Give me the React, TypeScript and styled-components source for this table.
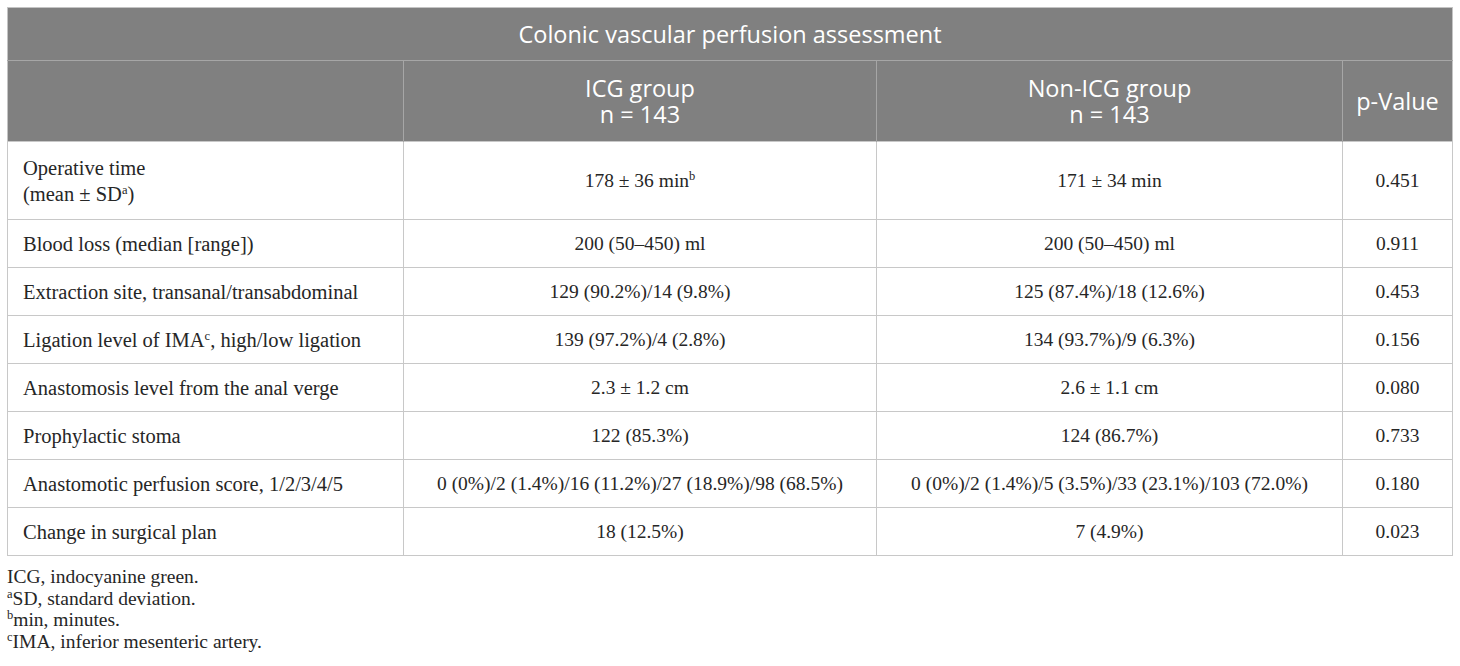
import styled, { createGlobalStyle } from 'styled-components'

const GlobalStyle = createGlobalStyle`
  body {
    margin: 0;
    background: #ffffff;
  }
`

const Sup = styled.sup`
  font-size: 12.5px;
  line-height: 0;
  vertical-align: 7px;
`

const rows = [
  { label: <>Operative time<br />(mean ± SD<Sup>a</Sup>)</>, icg: <>178 ± 36 min<Sup>b</Sup></>, non: '171 ± 34 min', p: '0.451', tall: true },
  { label: 'Blood loss (median [range])', icg: '200 (50–450) ml', non: '200 (50–450) ml', p: '0.911' },
  { label: 'Extraction site, transanal/transabdominal', icg: '129 (90.2%)/14 (9.8%)', non: '125 (87.4%)/18 (12.6%)', p: '0.453' },
  { label: <>Ligation level of IMA<Sup>c</Sup>, high/low ligation</>, icg: '139 (97.2%)/4 (2.8%)', non: '134 (93.7%)/9 (6.3%)', p: '0.156' },
  { label: 'Anastomosis level from the anal verge', icg: '2.3 ± 1.2 cm', non: '2.6 ± 1.1 cm', p: '0.080' },
  { label: 'Prophylactic stoma', icg: '122 (85.3%)', non: '124 (86.7%)', p: '0.733' },
  { label: 'Anastomotic perfusion score, 1/2/3/4/5', icg: '0 (0%)/2 (1.4%)/16 (11.2%)/27 (18.9%)/98 (68.5%)', non: '0 (0%)/2 (1.4%)/5 (3.5%)/33 (23.1%)/103 (72.0%)', p: '0.180' },
  { label: 'Change in surgical plan', icg: '18 (12.5%)', non: '7 (4.9%)', p: '0.023' }
]

const notes = [
  { mark: '', text: 'ICG, indocyanine green.' },
  { mark: 'a', text: 'SD, standard deviation.' },
  { mark: 'b', text: 'min, minutes.' },
  { mark: 'c', text: 'IMA, inferior mesenteric artery.' }
]

const App = () => {
  return (
    <StyledPage>
      <GlobalStyle />
      <StyledTable>
        <colgroup>
          <col style={{ width: 396 }} />
          <col style={{ width: 473 }} />
          <col style={{ width: 466 }} />
          <col style={{ width: 110 }} />
        </colgroup>
        <thead>
          <tr>
            <StyledTitle colSpan={4}>Colonic vascular perfusion assessment</StyledTitle>
          </tr>
          <tr>
            <StyledHead />
            <StyledHead>
              <StyledHeadLine>ICG group</StyledHeadLine>
              <StyledHeadLine>n = 143</StyledHeadLine>
            </StyledHead>
            <StyledHead>
              <StyledHeadLine>Non-ICG group</StyledHeadLine>
              <StyledHeadLine>n = 143</StyledHeadLine>
            </StyledHead>
            <StyledHead>p-Value</StyledHead>
          </tr>
        </thead>
        <tbody>
          {rows.map((row, i) => (
            <StyledRow key={i} $tall={row.tall}>
              <StyledLabel>{row.label}</StyledLabel>
              <StyledCell>{row.icg}</StyledCell>
              <StyledCell>{row.non}</StyledCell>
              <StyledCell>{row.p}</StyledCell>
            </StyledRow>
          ))}
        </tbody>
      </StyledTable>
      <StyledNotes>
        {notes.map((n) => (
          <StyledNote key={n.text}>
            {n.mark && <Sup>{n.mark}</Sup>}
            {n.text}
          </StyledNote>
        ))}
      </StyledNotes>
    </StyledPage>
  )
}

export default App

const StyledPage = styled.div`
  padding: 7px;
  font-family: 'Liberation Serif', 'Times New Roman', serif;
  color: #262626;
`

const StyledTable = styled.table`
  width: 1446px;
  border-collapse: collapse;
  table-layout: fixed;
  border: 1px solid #c4c4c4;
`

const StyledTitle = styled.th`
  height: 52px;
  padding: 0;
  background: #808080;
  color: #ffffff;
  font-family: 'Open Sans', 'Noto Sans', sans-serif;
  font-size: 23.5px;
  font-weight: 400;
  text-align: center;
  border-bottom: 1px solid #a6a6a6;
`

const StyledHead = styled.th`
  height: 80px;
  padding: 0;
  background: #808080;
  color: #ffffff;
  font-family: 'Open Sans', 'Noto Sans', sans-serif;
  font-size: 23.5px;
  font-weight: 400;
  text-align: center;
  border-left: 1px solid #a6a6a6;

  &:first-child {
    border-left: none;
  }
`

const StyledHeadLine = styled.div`
  line-height: 26px;
`

const StyledRow = styled.tr<{ $tall?: boolean }>`
  height: ${({ $tall }) => ($tall ? '78px' : '48px')};
`

const StyledCell = styled.td`
  padding: 0 8px;
  font-size: 19.5px;
  line-height: 26px;
  text-align: center;
  vertical-align: middle;
  border: 1px solid #c8c8c8;
`

const StyledLabel = styled(StyledCell)`
  padding-left: 15px;
  font-size: 20.5px;
  text-align: left;
`

const StyledNotes = styled.div`
  padding-top: 10px;
`

const StyledNote = styled.div`
  font-size: 19.5px;
  line-height: 21.7px;
`
